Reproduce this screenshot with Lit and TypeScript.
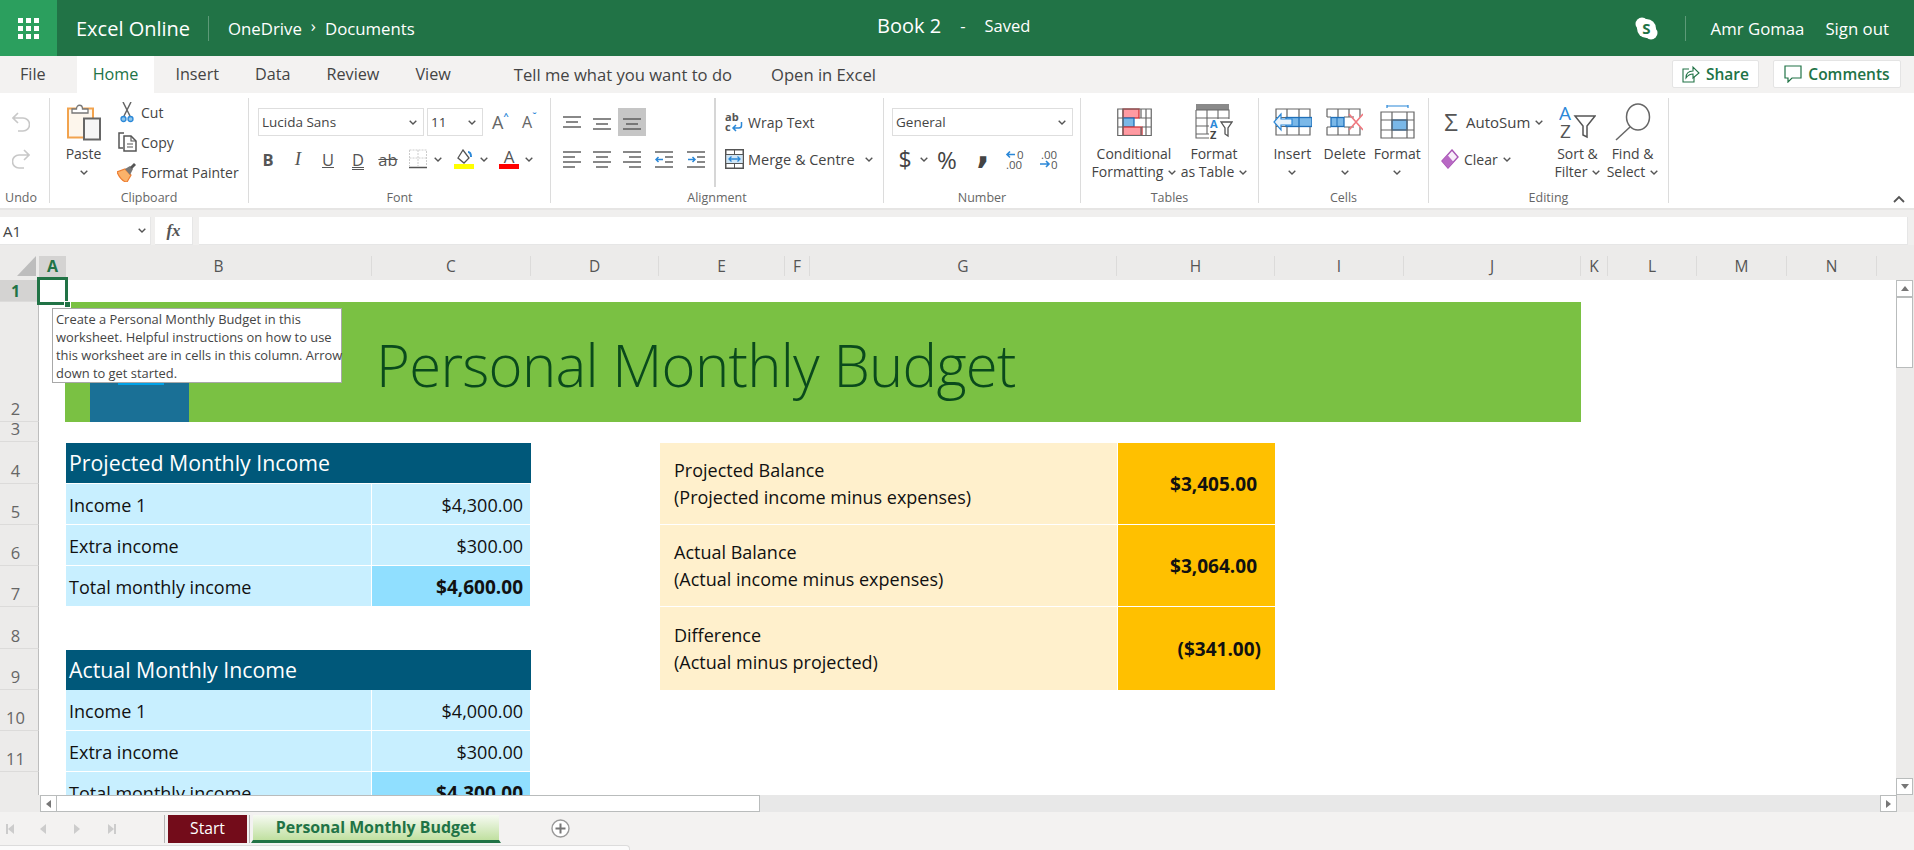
import { LitElement, html, css, svg } from 'lit';
import { customElement } from 'lit/decorators.js';

const chev = (c = '#555') => html`<svg class="chev" width="8" height="5" viewBox="0 0 8 5"><path d="M.7.7L4 4 7.300.7" fill="none" stroke=${c} stroke-width="1.400"/></svg>`;

// horizontal line icons for the alignment buttons: [y, x1, x2]
const lines = (rows: number[][], extra: unknown = null) => html`<svg width="18" height="20" viewBox="0 0 18 20">
  ${rows.map(([y, a, b]) => svg`<path d="M${a} ${y}H${b}" stroke="#555" stroke-width="1.400" fill="none"/>`)}${extra}
</svg>`;

const ICONS = {
  undo: html`<svg width="18" height="20" viewBox="0 0 18 20"><path d="M6 1L1 6l5 5M1 6h10a6 6 0 0 1 0 13H6" fill="none" stroke="#c8c8c8" stroke-width="1.600"/></svg>`,
  redo: html`<svg width="18" height="20" viewBox="0 0 18 20"><path d="M12 1l5 5-5 5M17 6H7a6 6 0 0 0 0 13h5" fill="none" stroke="#c8c8c8" stroke-width="1.600"/></svg>`,
  paste: html`<svg width="34" height="38" viewBox="0 0 34 38"><rect x="1" y="5.500" width="25" height="29" fill="#fdf6ec" stroke="#f2a34e" stroke-width="2"/><path d="M5 10V6h4.500c0-5 6-5 6 0H21v4z" fill="#fff" stroke="#777" stroke-width="1.300"/><rect x="17" y="15.500" width="16" height="21" fill="#f6f6f6" stroke="#666" stroke-width="2"/></svg>`,
  cut: html`<svg width="14" height="21" viewBox="0 0 14 21"><path d="M3 0l7 14M11 0L4 14" stroke="#666" stroke-width="1.500" fill="none"/><circle cx="3.500" cy="17" r="2.500" fill="#8dc4ea" stroke="#2b88d8" stroke-width="1.300"/><circle cx="10.500" cy="17" r="2.500" fill="#8dc4ea" stroke="#2b88d8" stroke-width="1.300"/></svg>`,
  copy: html`<svg width="19" height="20" viewBox="0 0 19 20"><path d="M6 1H1v15h4" fill="none" stroke="#555" stroke-width="1.500"/><path d="M6 4h7l5 5v10H6z" fill="#fff" stroke="#555" stroke-width="1.500"/><path d="M13 4v5h5M9 12h6M9 15h6" fill="none" stroke="#555" stroke-width="1.100"/></svg>`,
  painter: html`<svg width="20" height="20" viewBox="0 0 20 20"><path d="M0 10l8-3 6 6-4 7C6 20 2 15 0 10z" fill="#fbb26a" stroke="#ed7d31" stroke-width="1.200"/><path d="M8 7l5-3 3 3-3 6z" fill="#777"/><path d="M13 5l4-4 2 2-4 4z" fill="#555"/></svg>`,
  borders: html`<svg width="18" height="20" viewBox="0 0 18 20"><path d="M.5 1h17v16M.5 1v16M9 1v16M.5 9h17" fill="none" stroke="#ccc" stroke-width="1" stroke-dasharray="2 1"/><path d="M0 18.500h18" stroke="#555" stroke-width="1.500"/></svg>`,
  fill: html`<svg width="20" height="20" viewBox="0 0 20 20"><path d="M4 9l5-8 6 8-5 5z" fill="#fff" stroke="#555" stroke-width="1.300"/><path d="M14 3c3 0 3 3 3 5" fill="none" stroke="#2b88d8" stroke-width="2"/><rect y="15" width="20" height="5" fill="#ffff00"/></svg>`,
  wrap: html`<svg width="19" height="21" viewBox="0 0 19 21"><text x="0" y="9" font-size="11" font-weight="700" fill="#555">ab</text><text x="0" y="19" font-size="11" font-weight="700" fill="#555">c</text><path d="M16.500 10v3.500a2.500 2.500 0 0 1-2.500 2.500H8M11 13l-3 3 3 3" fill="none" stroke="#2b88d8" stroke-width="1.500"/></svg>`,
  merge: html`<svg width="19" height="20" viewBox="0 0 19 20"><rect x=".75" y=".75" width="17.500" height="18.500" fill="#fff" stroke="#555" stroke-width="1.500"/><path d="M1 5.500h17M1 14.500h17M9.500 1v4M9.500 15v4" stroke="#555" fill="none"/><rect x="1.500" y="6" width="16" height="8" fill="#cfe6f7"/><path d="M4 10h11M6.500 7.500L4 10l2.500 2.500M12.500 7.500L15 10l-2.500 2.500" fill="none" stroke="#2b88d8" stroke-width="1.300"/></svg>`,
  decUp: html`<svg width="21" height="21" viewBox="0 0 21 21"><path d="M10 5.500H2M5 2.500l-3 3 3 3" fill="none" stroke="#2b88d8" stroke-width="1.600"/><text x="12" y="9.500" font-size="11.500" fill="#555">0</text><text x="1" y="20" font-size="11.500" fill="#555">.00</text></svg>`,
  decDown: html`<svg width="21" height="21" viewBox="0 0 21 21"><text x="2" y="9.500" font-size="11.500" fill="#555">.00</text><path d="M1 15h9M7 12l3 3-3 3" fill="none" stroke="#2b88d8" stroke-width="1.600"/><text x="12" y="20" font-size="11.500" fill="#555">0</text></svg>`,
  conditional: html`<svg width="35" height="28" viewBox="0 0 35 28"><rect x="6" y="1" width="16" height="9" fill="#ff9aa2" stroke="#d13438" stroke-width="1.300"/><rect x="6" y="10" width="11" height="9" fill="#7ab8e8" stroke="#1f6fb8" stroke-width="1.300"/><rect x="6" y="19" width="19" height="8.500" fill="#ff9aa2" stroke="#d13438" stroke-width="1.300"/><path d="M.75 1h33.500v26.500H.75zM6 1v27M24 1v9M29 1v27M24 19v9M1 10h5M1 19h5M22 10h12M25 19h9" fill="none" stroke="#666" stroke-width="1.200"/></svg>`,
  asTable: html`<svg width="38" height="35" viewBox="0 0 38 35"><rect x="1" y="0" width="33" height="6" fill="#8a8a8a"/><path d="M1 6v28h15M1 6h33v12M12 6v24M23 6v10M1 14h33M1 22h14M1 30h14" fill="none" stroke="#666" stroke-width="1.100"/><rect x="14" y="15" width="24" height="20" fill="#fff"/><text x="15" y="24" font-size="11" font-weight="700" fill="#2b88d8">A</text><text x="15" y="35" font-size="11" font-weight="700" fill="#444">Z</text><path d="M26 18h11l-4 6v8l-3-2v-6z" fill="none" stroke="#555" stroke-width="1.300"/></svg>`,
  insert: html`<svg width="39" height="28" viewBox="0 0 39 28"><path d="M3 1h34v26H3zM3 9.500h34M3 18.500h34M14 1v26M26 1v26" fill="none" stroke="#666" stroke-width="1.200"/><rect x="13" y="9.500" width="26" height="9" fill="#7ab8e8" stroke="#1f6fb8" stroke-width="1.300"/><path d="M26 9.500v9" stroke="#1f6fb8" stroke-width="1.300"/><path d="M8 6L1 14l7 8v-5h11v-6H8z" fill="#e8f3fb" stroke="#2b88d8" stroke-width="1.200"/></svg>`,
  del: html`<svg width="37" height="28" viewBox="0 0 37 28"><path d="M1 9V1h33v8M1 19v8h33v-8M1 9h4M1 19h4M12 1v8M12 19v8M23 1v8M23 19v8M18 9h10M18 19h10" fill="none" stroke="#666" stroke-width="1.200"/><rect x="5" y="9.500" width="13" height="9" fill="#7ab8e8" stroke="#1f6fb8" stroke-width="1.300"/><path d="M11 9.500v9" stroke="#1f6fb8"/><path d="M23 6l14 16M37 6L23 22" stroke="#f0787f" stroke-width="1.600" fill="none"/></svg>`,
  formatCells: html`<svg width="35" height="34" viewBox="0 0 35 34"><path d="M7 1h21M7 0v3M28 0v3" stroke="#2b88d8" stroke-width="1.200" fill="none"/><rect x="12" y="15" width="15" height="10" fill="#7ab8e8" stroke="#1f6fb8" stroke-width="1.300"/><path d="M1 7h33v26H1zM1 15h33M1 25h33M12 7v26M27 7v26" fill="none" stroke="#666" stroke-width="1.200"/></svg>`,
  eraser: html`<svg width="18" height="20" viewBox="0 0 18 20"><path d="M11 1l6 7-10 11-6-7z" fill="#f7eef9" stroke="#a855b5" stroke-width="1.400"/><path d="M6.500 6l6 7-5.500 6-6-7z" fill="#b869c4"/></svg>`,
  sort: html`<svg width="37" height="34" viewBox="0 0 37 34"><text x="0" y="15" font-size="19" fill="#2b88d8">A</text><text x="1" y="33" font-size="19" fill="#555">Z</text><path d="M16 11h20l-8 10v11l-4-2v-9z" fill="none" stroke="#555" stroke-width="1.500"/></svg>`,
  find: html`<svg width="37" height="38" viewBox="0 0 37 38"><ellipse cx="24" cy="14" rx="11.500" ry="13" fill="none" stroke="#666" stroke-width="1.500"/><path d="M16 24L2 37" stroke="#666" stroke-width="1.500"/></svg>`,
  share: html`<svg width="18" height="18" viewBox="0 0 18 18"><path d="M7 4H1v13h11v-5" fill="none" stroke="#217346" stroke-width="1.100"/><path d="M4 13c0-5 3-7 7-7V2l6 6-6 5V9c-3 0-5 1-7 4z" fill="#fff" stroke="#217346" stroke-width="1.100"/></svg>`,
  comment: html`<svg width="18" height="18" viewBox="0 0 18 18"><path d="M1 1h16v12H8l-4 4v-4H1z" fill="none" stroke="#217346" stroke-width="1.200"/></svg>`,
  skype: html`<svg width="23" height="23" viewBox="0 0 23 23"><circle cx="7" cy="7" r="6.500" fill="#fff"/><circle cx="16" cy="16" r="6.500" fill="#fff"/><circle cx="11.500" cy="11.500" r="9.500" fill="#fff"/><text x="11.500" y="17" text-anchor="middle" font-size="15" font-weight="700" fill="#217346">S</text></svg>`,
  plus: html`<svg width="19" height="19" viewBox="0 0 19 19"><circle cx="9.500" cy="9.500" r="8.500" fill="#fff" stroke="#999" stroke-width="1.400"/><path d="M9.500 4.500v10M4.500 9.500h10" stroke="#777" stroke-width="2"/></svg>`,
  up: html`<svg width="12" height="8" viewBox="0 0 12 8"><path d="M1 7l5-5 5 5" fill="none" stroke="#555" stroke-width="1.800"/></svg>`,
};

const COLS: [string, string][] = [
  ['A', 'col active'], ['B', 'col'], ['C', 'col'], ['D', 'col'], ['E', 'col'], ['F', 'col'], ['G', 'col'],
  ['H', 'col'], ['I', 'col'], ['J', 'col'], ['K', 'col'], ['L', 'col'], ['M', 'col'], ['N', 'col'], ['', 'col blank'],
];
const ROWS = ['1', '2', '3', '4', '5', '6', '7', '8', '9', '10', '11', ''];

const income = (title: string, one: string, extra: string, total: string, cls: string) => html`
  <div class="income ${cls}">
    <div class="inc-head">${title}</div>
    <div class="inc-label">Income 1</div><div class="inc-val">${one}</div>
    <div class="inc-label">Extra income</div><div class="inc-val">${extra}</div>
    <div class="inc-label">Total monthly income</div><div class="inc-val total">${total}</div>
  </div>`;

const BALANCES = [
  ['Projected Balance', '(Projected income minus expenses)', '$3,405.00', ''],
  ['Actual Balance', '(Actual income minus expenses)', '$3,064.00', ''],
  ['Difference', '(Actual minus projected)', '($341.00)', 'neg'],
];

@customElement('app-root')
export class AppRoot extends LitElement {
  static override styles = css`
    :host {
      display: block;
      width: 1914px;
      height: 850px;
      overflow: hidden;
      background: #f3f2f1;
      color: #444;
      font-family: "Open Sans", "Liberation Sans", sans-serif;
      font-size: 14px;
    }
    svg { display: block; flex: none; }

    /* top bar */
    .topbar { height: 56px; background: #217346; color: #fff; display: flex; align-items: center; position: relative; }
    .waffle { width: 57px; height: 56px; background: #2b9f5e; display: flex; align-items: center; justify-content: center; }
    .waffle div { display: grid; grid-template-columns: repeat(3, 5px); gap: 3px; }
    .waffle i { display: block; width: 5px; height: 5px; background: #fff; }
    .brand { margin-left: 19px; font-size: 20px; width: 132px; }
    .vsep { width: 1px; height: 25px; background: #5d9a78; }
    .crumb { margin-left: 19px; font-size: 16.800px; display: flex; align-items: center; gap: 9px; }
    .crumb b { font-weight: 400; font-size: 17px; margin-top: -5px; }
    .doc { position: absolute; left: 877px; top: 0; line-height: 52px; font-size: 20px; display: flex; gap: 19px; }
    .doc .small { font-size: 16.500px; }
    .user { margin-left: auto; display: flex; align-items: center; font-size: 16.800px; padding-right: 25px; }
    .user .vsep { margin: 0 25px 0 27px; }
    .user span + span { margin-left: 21px; }

    /* tabs */
    .tabs { height: 37px; display: flex; font-size: 16.200px; color: #444; }
    .tab { padding: 0 16px; line-height: 37px; margin-right: 4px; }
    .tab.file { margin: 0 15px 0 4px; }
    .tab.home { background: #fff; color: #217346; margin-right: 5px; }
    .tab.tell { margin-left: 27px; margin-right: 7px; font-size: 16.600px; }
    .tab.open { font-size: 16.600px; }
    .actions { margin-left: auto; display: flex; gap: 14px; padding: 4px 13px 0 0; }
    .act { height: 28px; box-sizing: border-box; background: #fff; border: 1px solid #e4e4e4; border-radius: 2px; display: flex; align-items: center; justify-content: center; gap: 6px; color: #217346; font-size: 15.500px; font-weight: 600; }
    .act.share { width: 87px; }
    .act.comments { width: 128px; }

    /* ribbon */
    .ribbon { height: 117px; box-sizing: border-box; padding-top: 5px; background: #fff; display: flex; font-size: 14px; color: #444; border-bottom: 2px solid #e6e5e4; }
    .group { height: 105px; box-sizing: border-box; border-right: 1px solid #dcdcdc; display: flex; flex-direction: column; flex: none; }
    .body { height: 96px; display: flex; }
    .label { height: 10px; line-height: 10px; text-align: center; font-size: 12.500px; color: #666; }
    .g-undo { width: 50px; padding-right: 7px; }
    .g-clip { width: 199px; }
    .g-font { width: 302px; }
    .g-align { width: 333px; }
    .g-num { width: 197px; }
    .g-tables { width: 178px; }
    .g-cells { width: 170px; }
    .g-edit { width: 240px; }
    .rest { flex: 1; display: flex; justify-content: flex-end; align-items: flex-end; padding: 0 9px 5px 0; }

    .rows { display: flex; flex-direction: column; gap: 9px; padding-top: 10px; }
    .undo-rows { width: 100%; }
    .undo-rows .row { justify-content: center; }
    .row { height: 28px; display: flex; align-items: center; }
    .big { display: flex; flex-direction: column; align-items: center; flex: none; line-height: 18px; white-space: nowrap; }
    .big .ic { height: 47px; display: flex; align-items: center; justify-content: center; }
    .big .ln { display: flex; align-items: center; gap: 5px; height: 18px; }
    .paste { width: 67px; }
    .clip-list { display: flex; flex-direction: column; margin-top: -1px; }
    .clip-item { height: 30px; display: flex; align-items: center; }
    .clip-item .slot { width: 20px; display: flex; justify-content: center; margin-right: 4px; }

    .select { box-sizing: border-box; height: 28px; border: 1px solid #dedede; display: flex; align-items: center; justify-content: space-between; padding: 0 6px 0 3px; font-size: 13.500px; color: #444; }
    .font-body { padding-left: 9px; }
    .font-row { gap: 3px; }
    .s-font { width: 166px; }
    .s-size { width: 56px; }
    .grow { display: flex; align-items: flex-start; font-size: 18px; color: #666; line-height: 22px; width: 16px; margin-left: 6px; }
    .grow.shrink { margin-left: 11px; font-size: 16px; }
    .grow small { font-size: 9px; line-height: 10px; color: #2b88d8; font-weight: 700; }
    .tools { gap: 10px; }
    .t { width: 20px; display: flex; justify-content: center; font-size: 16.500px; color: #555; }
    .t.bold { font-weight: 700; }
    .t.it { font-family: "Liberation Serif", serif; font-style: italic; font-size: 19px; }
    .t.un { text-decoration: underline; }
    .t.dun { text-decoration: underline double; }
    .t.strike { text-decoration: line-through; }
    .pair { display: flex; align-items: center; gap: 6px; }
    .pair.fill-pair { margin-left: 2px; }
    .pair.color-pair { margin-left: 1px; }
    .fa { width: 20px; display: flex; flex-direction: column; align-items: center; font-size: 17px; line-height: 15px; color: #555; }
    .fa i { display: block; width: 20px; height: 5px; background: #f00; }

    .al-left { width: 163px; padding-left: 12px; box-sizing: border-box; flex: none; }
    .al-row1, .al-row2 { gap: 12px; }
    .al-row2 .indent { margin-left: 2px; }
    .sel { width: 28px; height: 28px; background: #c6c6c6; display: flex; align-items: center; justify-content: center; margin-left: -5px; }
    .al-sep { width: 2px; height: 89px; background: #d6d6d6; flex: none; }
    .al-right { padding-left: 9px; }
    .al-line { gap: 4px; }
    .al-line .merge { font-size: 14.500px; }
    .al-line .merge-chev { margin-left: 6px; }

    .num-body { padding-left: 8px; }
    .s-num { width: 181px; }
    .num-tools { padding-left: 5px; }
    .n-dollar { width: 16px; font-size: 23px; color: #444; text-align: center; }
    .n-chev { margin-left: 7px; margin-right: 7px; }
    .n-pct { width: 24px; font-size: 24px; color: #444; text-align: center; }
    .n-comma { width: 14px; margin: -17px 0 0 17px; font-family: "DejaVu Sans", sans-serif; font-size: 36px; font-weight: 700; line-height: 20px; color: #444; text-align: center; }
    .n-up { margin-left: 15px; }
    .n-down { margin-left: 13px; }

    .tables-body { padding-left: 11px; }
    .b-cond { width: 84px; }
    .b-table { width: 76px; }
    .cells-body { padding-left: 7px; }
    .b-cell { width: 52.500px; }
    .edit-left { width: 121px; padding-left: 12px; box-sizing: border-box; flex: none; }
    .edit-line { gap: 5px; }
    .autosum { font-size: 15px; }
    .sigma { width: 20px; font-size: 24px; line-height: 24px; color: #555; text-align: center; }
    .b-edit { width: 55px; }

    /* formula bar */
    .formula { height: 35px; box-sizing: border-box; padding-top: 7px; display: flex; gap: 4px; background: #f0efee; }
    .fbox { height: 28px; box-sizing: border-box; background: #fff; border: 1px solid #e6e6e6; border-top: 0; border-left: 0; display: flex; align-items: center; }
    .fname { width: 151px; padding: 0 4px 0 3px; justify-content: space-between; font-size: 15px; }
    .ffx { width: 38px; justify-content: center; font-family: "Liberation Serif", serif; font-style: italic; font-weight: 700; font-size: 17px; color: #555; }
    .finput { width: 1709px; margin-left: 2px; }

    /* sheet */
    .main { display: flex; background: #ecebea; }
    .sheet {
      width: 1896px;
      height: 550px;
      position: relative;
      overflow: hidden;
      display: grid;
      grid-template-columns: 39px 27px 306px 159px 128px 126px 25px 307px 158px 129px 177px 27px 89px 90px 90px 19px;
      grid-template-rows: 35px 22px 120px 20px 42px 41px 41px 41px 42px 41px 41px 41px 41px;
      background: #fff;
      font-size: 18px;
      color: #111;
    }
    .corner { grid-column: 1; grid-row: 1; background: #ecebea; padding: 11px 0 0 17px; }
    .col { background: #ecebea; display: flex; }
    .col span { margin-top: 11px; height: 20px; flex: 1; line-height: 20px; text-align: center; border-right: 1px solid #dcdbda; font-size: 15.500px; color: #555; }
    .col.active { background: linear-gradient(#ecebea 11px, #d4d3d2 11px); }
    .col.active span { border: 0; font-weight: 700; color: #217346; font-size: 16px; }
    .col.blank span { border: 0; }
    .rowh { grid-column: 1; background: #ecebea; border-right: 1px solid #bdbdbd; border-bottom: 1px solid #dcdbda; box-sizing: border-box; display: flex; align-items: flex-end; justify-content: center; padding: 0 7px 1px 0; font-size: 16.500px; line-height: 22px; color: #666; }
    .rowh.active { background: #d4d3d2; color: #217346; font-weight: 700; font-size: 16px; align-items: center; padding-bottom: 0; }
    .rowh.last { border-bottom: 0; }

    .banner { grid-column: 3 / 12; grid-row: 3; margin-left: -1px; background: #7ac143; display: flex; }
    .logo { margin: 81px 0 0 25px; width: 99px; height: 39px; background: #1a7096; position: relative; flex: none; }
    .logo::before { content: ""; position: absolute; left: 28px; top: 0; width: 46px; height: 2px; background: #00a2e8; }
    .title { margin-left: 187px; font-size: 58px; font-weight: 300; letter-spacing: -0.7px; line-height: 126px; color: #0a4a1c; white-space: nowrap; }

    .income { grid-column: 3 / 5; display: grid; grid-template-columns: subgrid; grid-template-rows: subgrid; }
    .income.proj { grid-row: 5 / 9; }
    .income.actual { grid-row: 10 / 14; }
    .inc-head { grid-column: 1 / 3; background: #00587a; color: #fff; font-size: 21.300px; line-height: 40px; height: 40px; padding-left: 3px; margin: 1px 0; }
    .inc-label { background: #c8efff; border-bottom: 1px solid #fff; border-right: 1px solid #fff; display: flex; align-items: center; padding: 2px 0 0 3px; white-space: nowrap; }
    .inc-val { background: #c8efff; border-bottom: 1px solid #fff; margin-right: 1px; display: flex; align-items: center; justify-content: flex-end; padding: 2px 7px 0 0; }
    .inc-val.total { background: #90dfff; font-weight: 700; font-size: 19px; }

    .balance { grid-column: 6 / 10; grid-row: 5 / 11; margin: 1px 0 0 1px; display: grid; grid-template-columns: 458px 157px; grid-template-rows: 82px 82px 83px; }
    .bal-label { background: #fff0cc; border-bottom: 1px solid #fff; border-right: 1px solid #fff; padding: 1px 0 0 14px; display: flex; flex-direction: column; justify-content: center; line-height: 27px; }
    .bal-val { background: #ffc000; border-bottom: 1px solid #fff; display: flex; align-items: center; justify-content: flex-end; padding-right: 18px; font-weight: 700; font-size: 19px; }
    .bal-val.neg { padding-right: 14px; }
    .bal-label:nth-last-child(2), .bal-val:last-child { border-bottom: 0; }

    .selbox { position: absolute; left: 37px; top: 32px; width: 31px; height: 28px; box-sizing: border-box; border: 3px solid #217346; }
    .selbox::after { content: ""; position: absolute; right: -6px; bottom: -6px; width: 5px; height: 5px; background: #217346; border: 1px solid #fff; }
    .tip { position: absolute; left: 52px; top: 63px; width: 290px; height: 75px; box-sizing: border-box; background: #fff; border: 1px solid #a8a8a8; padding: 1px 3px; font-size: 12.900px; line-height: 18px; color: #444; white-space: nowrap; }

    .vscroll { width: 18px; height: 550px; box-sizing: border-box; padding-top: 35px; display: flex; flex-direction: column; background: #ecebea; }
    .sbtn { flex: none; box-sizing: border-box; width: 17px; height: 17px; background: #fff; border: 1px solid #b9bcbc; display: flex; align-items: center; justify-content: center; }
    .tri { width: 0; height: 0; border: 4px solid transparent; }
    .tri.u { border-bottom: 5px solid #777; border-top: 0; }
    .tri.d { border-top: 5px solid #777; border-bottom: 0; }
    .tri.l { border-right: 5px solid #777; border-left: 0; }
    .tri.r { border-left: 5px solid #777; border-right: 0; }
    .vthumb { width: 17px; height: 71px; box-sizing: border-box; background: #fff; border: 1px solid #b9bcbc; }
    .vtrack { flex: 1; }

    .hscroll { height: 17px; display: flex; background: #ecebea; }
    .hlead { width: 40px; flex: none; }
    .hthumb { width: 703px; box-sizing: border-box; background: #fff; border: 1px solid #b9bcbc; border-left: 0; flex: none; }
    .htrack { width: 1120px; flex: none; background: #e8e8e8; }

    /* sheet tabs */
    .sheets { height: 33px; display: flex; padding-top: 3px; box-sizing: border-box; }
    .nav { width: 164px; flex: none; display: flex; padding: 8px 0 0 6px; box-sizing: border-box; gap: 26px; }
    .nav i { width: 8px; height: 12px; display: flex; align-items: center; }
    .nav .tri { border-width: 5px; }
    .nav .tri.l { border-right: 6px solid #ccc; border-left: 0; }
    .nav .tri.r { border-left: 6px solid #ccc; border-right: 0; }
    .nav .bar { width: 2px; height: 10px; background: #ccc; flex: none; }
    .stab-sep { width: 1px; height: 28px; background: #b5b5b5; flex: none; }
    .stab { height: 28px; box-sizing: border-box; display: flex; align-items: center; justify-content: center; }
    .stab.start { width: 79px; margin: 0 2px 0 3px; padding-bottom: 3px; background: #730c1a; color: #fff; font-size: 15.700px; }
    .stab.cur { width: 250px; margin-left: 1px; padding-bottom: 2px; background: linear-gradient(#f6faf2, #c0e0a0); border: 2px solid #f3f2f1; border-bottom: 3px solid #217346; border-top: 0; color: #217346; font-weight: 700; font-size: 15.900px; }
    .add { margin: 4px 0 0 50px; }
    .status { width: 630px; height: 5px; box-sizing: border-box; background: #fbfbfb; border-top: 1px solid #dcdcdc; border-right: 1px solid #dcdcdc; border-top-right-radius: 4px; }
  `;

  override render() {
    return html`
      <div class="topbar">
        <div class="waffle"><div>${Array.from({ length: 9 }, () => html`<i></i>`)}</div></div>
        <div class="brand">Excel Online</div>
        <div class="vsep"></div>
        <div class="crumb"><span>OneDrive</span><b>›</b><span>Documents</span></div>
        <div class="doc"><span>Book 2</span><span class="small">-</span><span class="small">Saved</span></div>
        <div class="user">${ICONS.skype}<div class="vsep"></div><span>Amr Gomaa</span><span>Sign out</span></div>
      </div>

      <div class="tabs">
        <div class="tab file">File</div>
        <div class="tab home">Home</div>
        <div class="tab">Insert</div>
        <div class="tab">Data</div>
        <div class="tab">Review</div>
        <div class="tab">View</div>
        <div class="tab tell">Tell me what you want to do</div>
        <div class="tab open">Open in Excel</div>
        <div class="actions">
          <div class="act share">${ICONS.share}Share</div>
          <div class="act comments">${ICONS.comment}Comments</div>
        </div>
      </div>

      <div class="ribbon">
        <div class="group g-undo">
          <div class="body"><div class="rows undo-rows">
            <div class="row">${ICONS.undo}</div>
            <div class="row">${ICONS.redo}</div>
          </div></div>
          <div class="label">Undo</div>
        </div>

        <div class="group g-clip">
          <div class="body">
            <div class="big paste">
              <div class="ic">${ICONS.paste}</div>
              <div class="ln">Paste</div>
              <div class="ln">${chev()}</div>
            </div>
            <div class="clip-list">
              <div class="clip-item"><div class="slot">${ICONS.cut}</div>Cut</div>
              <div class="clip-item"><div class="slot">${ICONS.copy}</div>Copy</div>
              <div class="clip-item"><div class="slot">${ICONS.painter}</div>Format Painter</div>
            </div>
          </div>
          <div class="label">Clipboard</div>
        </div>

        <div class="group g-font">
          <div class="body font-body"><div class="rows">
            <div class="row font-row">
              <div class="select s-font">Lucida Sans ${chev()}</div>
              <div class="select s-size">11 ${chev()}</div>
              <div class="grow">A<small>^</small></div>
              <div class="grow shrink">A<small>ˇ</small></div>
            </div>
            <div class="row tools">
              <div class="t bold">B</div>
              <div class="t it">I</div>
              <div class="t un">U</div>
              <div class="t dun">D</div>
              <div class="t strike">ab</div>
              <div class="pair"><div class="t">${ICONS.borders}</div>${chev()}</div>
              <div class="pair fill-pair"><div class="t">${ICONS.fill}</div>${chev()}</div>
              <div class="pair color-pair"><div class="fa">A<i></i></div>${chev()}</div>
            </div>
          </div></div>
          <div class="label">Font</div>
        </div>

        <div class="group g-align">
          <div class="body">
            <div class="rows al-left">
              <div class="row al-row1">
                ${lines([[5, 0, 18], [10, 3, 15], [15, 0, 18]])}
                ${lines([[7, 0, 18], [12, 3, 15], [17, 0, 18]])}
                <div class="sel">${lines([[7, 0, 18], [12, 3, 15], [17, 0, 18]])}</div>
              </div>
              <div class="row al-row2">
                ${lines([[3, 0, 18], [8, 0, 12], [13, 0, 18], [18, 0, 12]])}
                ${lines([[3, 0, 18], [8, 3, 15], [13, 0, 18], [18, 3, 15]])}
                ${lines([[3, 0, 18], [8, 6, 18], [13, 0, 18], [18, 6, 18]])}
                <div class="indent">${lines([[3, 0, 18], [8, 10, 18], [13, 10, 18], [18, 0, 18]], svg`<path d="M8 10.500H1M3.500 8L1 10.500 3.500 13" stroke="#2b88d8" stroke-width="1.500" fill="none"/>`)}</div>
                <div class="indent">${lines([[3, 0, 18], [8, 10, 18], [13, 10, 18], [18, 0, 18]], svg`<path d="M1 10.500h7M5.500 8L8 10.500 5.500 13" stroke="#2b88d8" stroke-width="1.500" fill="none"/>`)}</div>
              </div>
            </div>
            <div class="al-sep"></div>
            <div class="rows al-right">
              <div class="row al-line">${ICONS.wrap}<span>Wrap Text</span></div>
              <div class="row al-line">${ICONS.merge}<span class="merge">Merge &amp; Centre</span><span class="merge-chev">${chev()}</span></div>
            </div>
          </div>
          <div class="label">Alignment</div>
        </div>

        <div class="group g-num">
          <div class="body num-body"><div class="rows">
            <div class="row"><div class="select s-num">General ${chev()}</div></div>
            <div class="row num-tools">
              <div class="n-dollar">$</div>
              <span class="n-chev">${chev()}</span>
              <div class="n-pct">%</div>
              <div class="n-comma">,</div>
              <div class="n-up">${ICONS.decUp}</div>
              <div class="n-down">${ICONS.decDown}</div>
            </div>
          </div></div>
          <div class="label">Number</div>
        </div>

        <div class="group g-tables">
          <div class="body tables-body">
            <div class="big b-cond"><div class="ic">${ICONS.conditional}</div><div class="ln">Conditional</div><div class="ln">Formatting ${chev()}</div></div>
            <div class="big b-table"><div class="ic">${ICONS.asTable}</div><div class="ln">Format</div><div class="ln">as Table ${chev()}</div></div>
          </div>
          <div class="label">Tables</div>
        </div>

        <div class="group g-cells">
          <div class="body cells-body">
            <div class="big b-cell"><div class="ic">${ICONS.insert}</div><div class="ln">Insert</div><div class="ln">${chev()}</div></div>
            <div class="big b-cell"><div class="ic">${ICONS.del}</div><div class="ln">Delete</div><div class="ln">${chev()}</div></div>
            <div class="big b-cell"><div class="ic">${ICONS.formatCells}</div><div class="ln">Format</div><div class="ln">${chev()}</div></div>
          </div>
          <div class="label">Cells</div>
        </div>

        <div class="group g-edit">
          <div class="body">
            <div class="rows edit-left">
              <div class="row edit-line"><div class="sigma">Σ</div><span class="autosum">AutoSum</span>${chev()}</div>
              <div class="row edit-line">${ICONS.eraser}<span>Clear</span>${chev()}</div>
            </div>
            <div class="big b-edit"><div class="ic">${ICONS.sort}</div><div class="ln">Sort &amp;</div><div class="ln">Filter ${chev()}</div></div>
            <div class="big b-edit"><div class="ic">${ICONS.find}</div><div class="ln">Find &amp;</div><div class="ln">Select ${chev()}</div></div>
          </div>
          <div class="label">Editing</div>
        </div>

        <div class="rest">${ICONS.up}</div>
      </div>

      <div class="formula">
        <div class="fbox fname">A1 ${chev()}</div>
        <div class="fbox ffx">fx</div>
        <div class="fbox finput"></div>
      </div>

      <div class="main">
        <div class="sheet">
          <div class="corner"><svg width="19" height="20" viewBox="0 0 19 20"><path d="M0 20L19 0v20z" fill="#bdbdbd"/></svg></div>
          ${COLS.map(([l, c]) => html`<div class=${c}><span>${l}</span></div>`)}
          ${ROWS.map((r, i) => html`<div class="rowh ${i === 0 ? 'active' : ''} ${r === '' ? 'last' : ''}">${r}</div>`)}

          <div class="banner"><div class="logo"></div><div class="title">Personal Monthly Budget</div></div>
          ${income('Projected Monthly Income', '$4,300.00', '$300.00', '$4,600.00', 'proj')}
          ${income('Actual Monthly Income', '$4,000.00', '$300.00', '$4,300.00', 'actual')}
          <div class="balance">
            ${BALANCES.map(([a, b, v, c]) => html`
              <div class="bal-label"><span>${a}</span><span>${b}</span></div>
              <div class="bal-val ${c}">${v}</div>`)}
          </div>

          <div class="selbox"></div>
          <div class="tip">Create a Personal Monthly Budget in this<br>worksheet. Helpful instructions on how to use<br>this worksheet are in cells in this column. Arrow<br>down to get started.</div>
        </div>
        <div class="vscroll">
          <div class="sbtn"><div class="tri u"></div></div>
          <div class="vthumb"></div>
          <div class="vtrack"></div>
          <div class="sbtn"><div class="tri d"></div></div>
        </div>
      </div>

      <div class="hscroll">
        <div class="hlead"></div>
        <div class="sbtn"><div class="tri l"></div></div>
        <div class="hthumb"></div>
        <div class="htrack"></div>
        <div class="sbtn"><div class="tri r"></div></div>
      </div>

      <div class="sheets">
        <div class="nav">
          <i><span class="bar"></span><span class="tri l"></span></i>
          <i><span class="tri l"></span></i>
          <i><span class="tri r"></span></i>
          <i><span class="tri r"></span><span class="bar"></span></i>
        </div>
        <div class="stab-sep"></div>
        <div class="stab start">Start</div>
        <div class="stab-sep"></div>
        <div class="stab cur">Personal Monthly Budget</div>
        <div class="add">${ICONS.plus}</div>
      </div>
      <div class="status"></div>
    `;
  }
}
